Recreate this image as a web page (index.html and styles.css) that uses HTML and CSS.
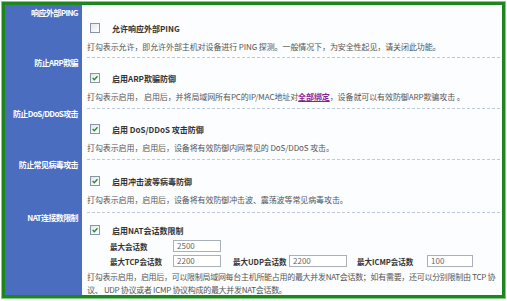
FILE: index.html
```html
<!DOCTYPE html>
<html lang="zh-CN">
<head>
  <meta charset="UTF-8" />
  <title>高级安全设置</title>
  <link rel="stylesheet" href="styles.css">
</head>
<body>
  <div class="frame">

    <div class="label">响应外部PING</div>
    <div class="cell first">
      <div class="check">
        <span class="box"></span>
        <b>允许响应外部PING</b>
      </div>
      <p class="desc">打勾表示允许，即允许外部主机对设备进行 PING 探测。一般情况下，为安全性起见，请关闭此功能。</p>
    </div>

    <div class="label">防止ARP欺骗</div>
    <div class="cell">
      <div class="check">
        <span class="box on"><svg viewBox="0 0 9 9"><path d="M1.8 4.6 L3.7 6.5 L7.3 2.5" /></svg></span>
        <b>启用ARP欺骗防御</b>
      </div>
      <p class="desc">打勾表示启用， 启用后，并将局域网所有PC的IP/MAC地址对<a href="#">全部绑定</a>，设备就可以有效防御ARP欺骗攻击 。</p>
    </div>

    <div class="label">防止DoS/DDoS攻击</div>
    <div class="cell">
      <div class="check">
        <span class="box on"><svg viewBox="0 0 9 9"><path d="M1.8 4.6 L3.7 6.5 L7.3 2.5" /></svg></span>
        <b>启用 DoS/DDoS 攻击防御</b>
      </div>
      <p class="desc">打勾表示启用，启用后，设备将有效防御内网常见的 DoS/DDoS 攻击。</p>
    </div>

    <div class="label">防止常见病毒攻击</div>
    <div class="cell tall">
      <div class="check">
        <span class="box on"><svg viewBox="0 0 9 9"><path d="M1.8 4.6 L3.7 6.5 L7.3 2.5" /></svg></span>
        <b>启用冲击波等病毒防御</b>
      </div>
      <p class="desc">打勾表示启用，启用后，设备将有效防御冲击波、震荡波等常见病毒攻击。</p>
    </div>

    <div class="label">NAT连接数限制</div>
    <div class="cell last">
      <div class="check">
        <span class="box on"><svg viewBox="0 0 9 9"><path d="M1.8 4.6 L3.7 6.5 L7.3 2.5" /></svg></span>
        <b>启用NAT会话数限制</b>
      </div>
      <div class="limits">
        <div class="limit">
          <b class="name">最大会话数</b>
          <span class="field w47">2500</span>
        </div>
        <div class="limit">
          <b class="name">最大TCP会话数</b>
          <span class="field w47">2200</span>
          <b class="name2">最大UDP会话数</b>
          <span class="field w57">2200</span>
          <b class="name3">最大ICMP会话数</b>
          <span class="field w45">100</span>
        </div>
      </div>
      <p class="desc long">打勾表示启用，启用后，可以限制局域网每台主机所能占用的最大并发NAT会话数；如有需要，还可以分别限制由 TCP 协议、 UDP 协议或者 ICMP 协议构成的最大并发NAT会话数。</p>
    </div>

  </div>
</body>
</html>
```

FILE: styles.css
```css
body {
  margin: 0;
  background: #ffffff;
  font-family: "Noto Sans CJK SC", "Liberation Sans", sans-serif;
  font-size: 8px;
  color: #333;
}

.frame {
  margin: 2px;
  height: 290px;
  border: 3px solid #1f861f;
  box-shadow: 0 0 0 1px #7fcf7f;
  display: grid;
  grid-template-columns: 77px 1fr;
  grid-template-rows: 53px 51px 51px 53px 1fr;
  background: #fcfdfe;
  overflow: hidden;
}

.label {
  background: #4a6dc0;
  color: #ffffff;
  font-weight: bold;
  text-align: right;
  padding: 0 4px 0 0;
  line-height: 10px;
  letter-spacing: -0.6px;
  white-space: nowrap;
}

.label:first-child {
  padding-top: 3px;
}

.cell {
  margin-left: 5px;
  margin-right: 2px;
  padding-top: 14px;
  border-bottom: 1px dashed #bccadb;
}

.cell.first {
  padding-top: 17px;
}

.cell.tall {
  padding-top: 15px;
}

.cell.last {
  padding-top: 11px;
  border-bottom: none;
}

.check {
  display: flex;
  align-items: center;
  height: 12px;
  padding-left: 3px;
}

.check b {
  margin-left: 12px;
  color: #333;
}

.box {
  width: 8px;
  height: 8px;
  border: 1px solid #8696a8;
  background: linear-gradient(135deg, #e3e7ec, #ffffff);
  display: flex;
}

.box svg {
  width: 8px;
  height: 8px;
}

.box path {
  fill: none;
  stroke: #1f8f2a;
  stroke-width: 1.5;
}

.desc {
  margin: 7px 0 0 0;
  line-height: 12px;
  color: #555;
  letter-spacing: -0.1px;
  white-space: nowrap;
}

.desc a {
  color: #8a1f9a;
  font-weight: bold;
}

.desc.long {
  margin-top: 3px;
  line-height: 13px;
  letter-spacing: -0.3px;
  white-space: normal;
  word-break: break-all;
}

.limits {
  margin-top: 4px;
  padding-left: 23px;
  display: flex;
  flex-direction: column;
  gap: 3px;
}

.limit {
  display: flex;
  align-items: center;
  height: 12px;
  white-space: nowrap;
}

.limit b {
  font-size: 7.5px;
}

.limit .name {
  width: 63px;
}

.limit .name2 {
  margin-left: 12px;
  width: 56px;
}

.limit .name3 {
  margin-left: 10px;
  width: 70px;
}

.field {
  height: 10px;
  line-height: 10px;
  border: 1px solid #a9b0ba;
  background: #ffffff;
  color: #666;
  padding-left: 3px;
  box-sizing: content-box;
}

.w47 { width: 43px; }
.w57 { width: 53px; }
.w45 { width: 41px; }
```
